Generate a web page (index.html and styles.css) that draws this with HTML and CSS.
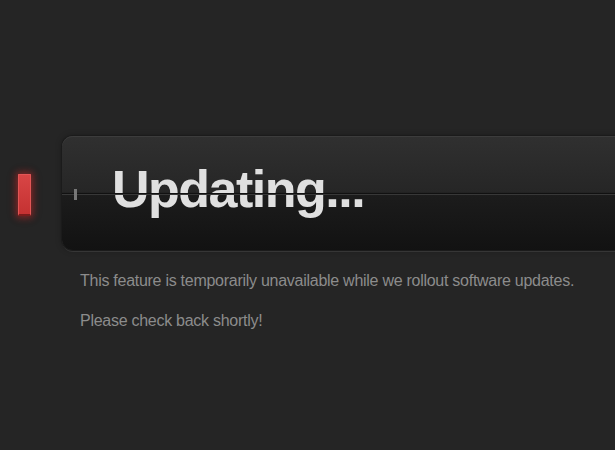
FILE: index.html
```html
<!DOCTYPE html>
<html lang="en">
<head>
    <meta charset="UTF-8">
    <meta name="viewport" content="width=device-width, initial-scale=1.0">
    <title>Updating...</title>
    <link rel="stylesheet" href="styles.css">
</head>
<body>
    <div class="page">
        <!-- Status light and title panel -->
        <div class="status-row">
            <div class="status-light"></div>
            <div class="panel">
                <h1 class="panel-title">Updating...</h1>
            </div>
        </div>

        <div class="message">
            <p>This feature is temporarily unavailable while we rollout software updates.</p>
            <p>Please check back shortly!</p>
        </div>
    </div>
</body>
</html>
```

FILE: styles.css
```css
html, body {
    margin: 0;
    padding: 0;
    background: #252525;
    overflow: hidden;
}

body {
    font-family: "Liberation Sans", Arial, sans-serif;
    height: 450px;
}

.page {
    padding-top: 136px;
}

.status-row {
    display: flex;
    align-items: flex-start;
}

.status-light {
    flex: none;
    width: 13px;
    height: 42px;
    margin-left: 18px;
    margin-top: 38px;
    background: linear-gradient(to bottom, #d84545, #c53232);
    border: 1px solid #e25656;
    border-bottom: 2px solid #7a1c1c;
    box-sizing: border-box;
    border-radius: 1px;
    box-shadow: 0 0 6px 2px rgba(200, 40, 40, 0.45), 0 0 12px rgba(200, 40, 40, 0.25);
}

.panel {
    position: relative;
    flex: 1;
    height: 114px;
    margin-left: 31px;
    margin-right: -20px;
    box-sizing: border-box;
    border-radius: 11px;
    background: linear-gradient(to bottom, #303030 0%, #262626 49%, #1c1c1c 50.5%, #121212 100%);
    box-shadow: 0 0 0 1px #1b1b1b, inset 0 1px 0 #3c3c3c, 0 2px 0 #363636, 0 0 6px rgba(0, 0, 0, 0.35);
    padding: 27px 0 0 50px;
}

/* the seam across the middle, drawn over the title */
.panel::after {
    content: "";
    position: absolute;
    left: 0;
    right: 0;
    top: 57px;
    height: 1px;
    background: #111;
    border-bottom: 1px solid #383838;
}

/* little tick on the seam */
.panel::before {
    content: "";
    position: absolute;
    left: 12px;
    top: 53px;
    width: 3px;
    height: 11px;
    background: #777;
    z-index: 2;
}

.panel-title {
    margin: 0;
    font-size: 52px;
    line-height: 52px;
    font-weight: bold;
    letter-spacing: -1.5px;
    color: #e0e0e0;
}

.message {
    padding: 21px 0 0 80px;
}

.message p {
    margin: 0 0 20px;
    font-size: 16px;
    line-height: 20px;
    letter-spacing: -0.27px;
    color: #8c8c8c;
}
```
